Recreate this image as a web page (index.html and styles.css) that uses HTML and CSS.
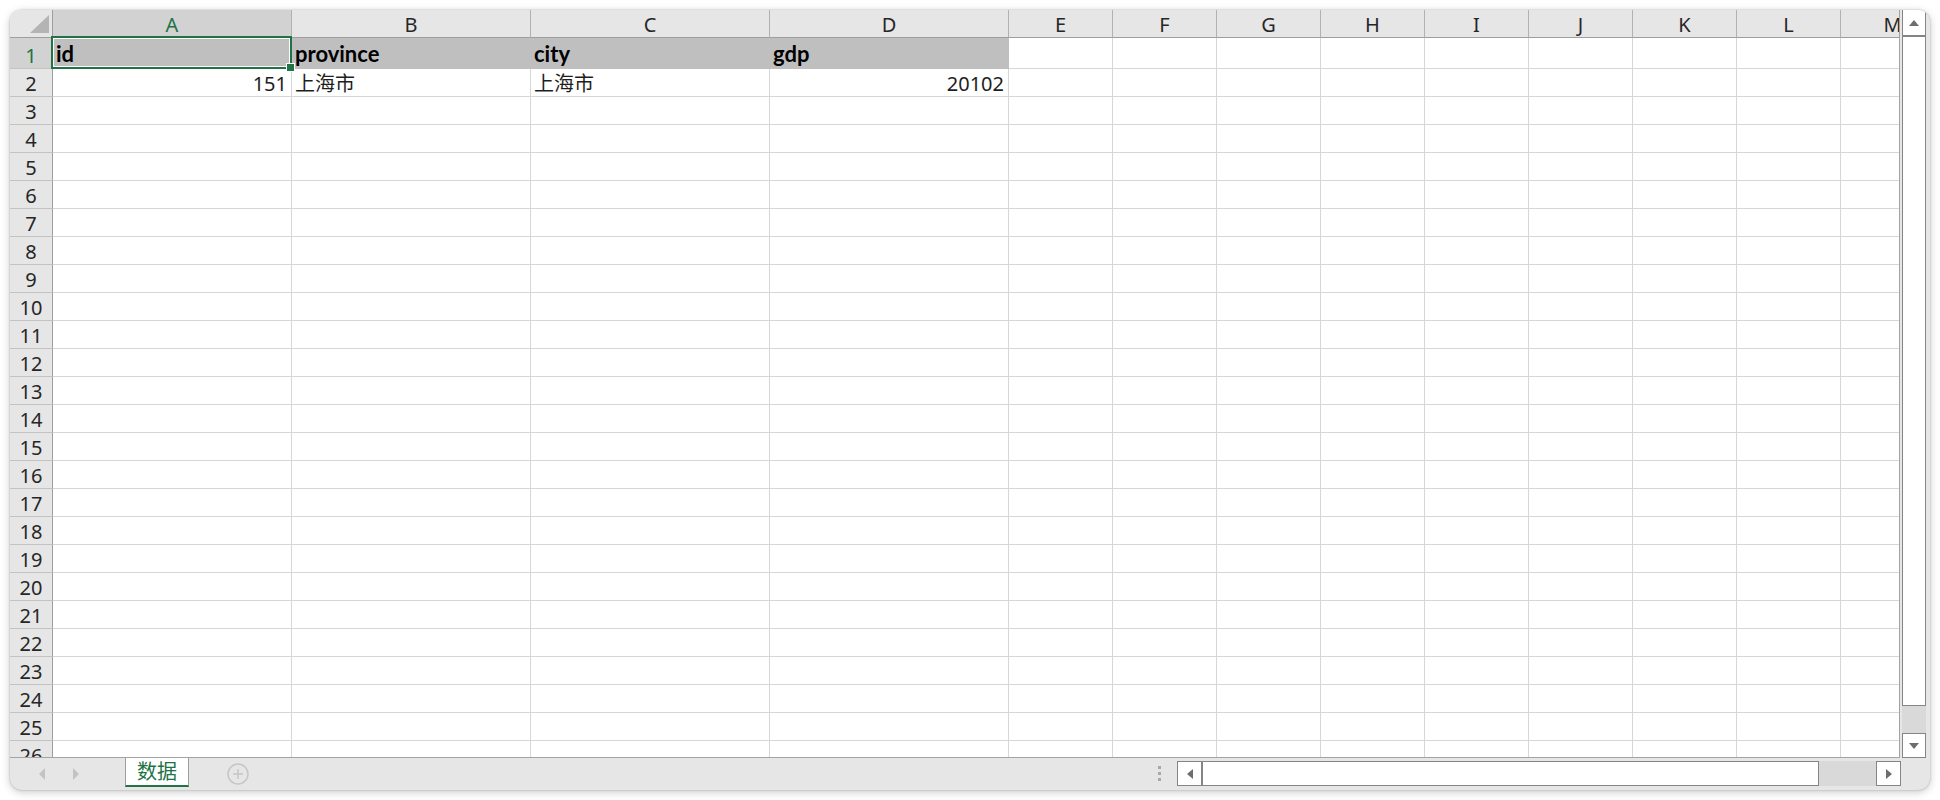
FILE: index.html
```html
<!DOCTYPE html>
<html lang="zh-CN">
<head>
<meta charset="utf-8">
<title>数据</title>
<link rel="stylesheet" href="styles.css">
</head>
<body>
<div class="window">
  <div class="main">
    <div class="sheet">
      <div class="row head">
        <span class="corner"><span class="tri"></span></span>
        <span class="ch sel">A</span><span class="ch">B</span><span class="ch">C</span><span class="ch">D</span><span class="ch">E</span><span class="ch">F</span><span class="ch">G</span><span class="ch">H</span><span class="ch">I</span><span class="ch">J</span><span class="ch">K</span><span class="ch">L</span><span class="ch">M</span>
      </div>
      <div class="row r1">
        <span class="rh sel">1</span>
        <span class="c fill b active">id</span><span class="c fill b">province</span><span class="c fill b">city</span><span class="c fill b">gdp</span><span class="c"></span><span class="c"></span><span class="c"></span><span class="c"></span><span class="c"></span><span class="c"></span><span class="c"></span><span class="c"></span><span class="c"></span>
      </div>
      <div class="row">
        <span class="rh">2</span>
        <span class="c num">151</span><span class="c">上海市</span><span class="c">上海市</span><span class="c num">20102</span><span class="c"></span><span class="c"></span><span class="c"></span><span class="c"></span><span class="c"></span><span class="c"></span><span class="c"></span><span class="c"></span><span class="c"></span>
      </div>
      <div class="row"><span class="rh">3</span><span class="c"></span><span class="c"></span><span class="c"></span><span class="c"></span><span class="c"></span><span class="c"></span><span class="c"></span><span class="c"></span><span class="c"></span><span class="c"></span><span class="c"></span><span class="c"></span><span class="c"></span></div>
      <div class="row"><span class="rh">4</span><span class="c"></span><span class="c"></span><span class="c"></span><span class="c"></span><span class="c"></span><span class="c"></span><span class="c"></span><span class="c"></span><span class="c"></span><span class="c"></span><span class="c"></span><span class="c"></span><span class="c"></span></div>
      <div class="row"><span class="rh">5</span><span class="c"></span><span class="c"></span><span class="c"></span><span class="c"></span><span class="c"></span><span class="c"></span><span class="c"></span><span class="c"></span><span class="c"></span><span class="c"></span><span class="c"></span><span class="c"></span><span class="c"></span></div>
      <div class="row"><span class="rh">6</span><span class="c"></span><span class="c"></span><span class="c"></span><span class="c"></span><span class="c"></span><span class="c"></span><span class="c"></span><span class="c"></span><span class="c"></span><span class="c"></span><span class="c"></span><span class="c"></span><span class="c"></span></div>
      <div class="row"><span class="rh">7</span><span class="c"></span><span class="c"></span><span class="c"></span><span class="c"></span><span class="c"></span><span class="c"></span><span class="c"></span><span class="c"></span><span class="c"></span><span class="c"></span><span class="c"></span><span class="c"></span><span class="c"></span></div>
      <div class="row"><span class="rh">8</span><span class="c"></span><span class="c"></span><span class="c"></span><span class="c"></span><span class="c"></span><span class="c"></span><span class="c"></span><span class="c"></span><span class="c"></span><span class="c"></span><span class="c"></span><span class="c"></span><span class="c"></span></div>
      <div class="row"><span class="rh">9</span><span class="c"></span><span class="c"></span><span class="c"></span><span class="c"></span><span class="c"></span><span class="c"></span><span class="c"></span><span class="c"></span><span class="c"></span><span class="c"></span><span class="c"></span><span class="c"></span><span class="c"></span></div>
      <div class="row"><span class="rh">10</span><span class="c"></span><span class="c"></span><span class="c"></span><span class="c"></span><span class="c"></span><span class="c"></span><span class="c"></span><span class="c"></span><span class="c"></span><span class="c"></span><span class="c"></span><span class="c"></span><span class="c"></span></div>
      <div class="row"><span class="rh">11</span><span class="c"></span><span class="c"></span><span class="c"></span><span class="c"></span><span class="c"></span><span class="c"></span><span class="c"></span><span class="c"></span><span class="c"></span><span class="c"></span><span class="c"></span><span class="c"></span><span class="c"></span></div>
      <div class="row"><span class="rh">12</span><span class="c"></span><span class="c"></span><span class="c"></span><span class="c"></span><span class="c"></span><span class="c"></span><span class="c"></span><span class="c"></span><span class="c"></span><span class="c"></span><span class="c"></span><span class="c"></span><span class="c"></span></div>
      <div class="row"><span class="rh">13</span><span class="c"></span><span class="c"></span><span class="c"></span><span class="c"></span><span class="c"></span><span class="c"></span><span class="c"></span><span class="c"></span><span class="c"></span><span class="c"></span><span class="c"></span><span class="c"></span><span class="c"></span></div>
      <div class="row"><span class="rh">14</span><span class="c"></span><span class="c"></span><span class="c"></span><span class="c"></span><span class="c"></span><span class="c"></span><span class="c"></span><span class="c"></span><span class="c"></span><span class="c"></span><span class="c"></span><span class="c"></span><span class="c"></span></div>
      <div class="row"><span class="rh">15</span><span class="c"></span><span class="c"></span><span class="c"></span><span class="c"></span><span class="c"></span><span class="c"></span><span class="c"></span><span class="c"></span><span class="c"></span><span class="c"></span><span class="c"></span><span class="c"></span><span class="c"></span></div>
      <div class="row"><span class="rh">16</span><span class="c"></span><span class="c"></span><span class="c"></span><span class="c"></span><span class="c"></span><span class="c"></span><span class="c"></span><span class="c"></span><span class="c"></span><span class="c"></span><span class="c"></span><span class="c"></span><span class="c"></span></div>
      <div class="row"><span class="rh">17</span><span class="c"></span><span class="c"></span><span class="c"></span><span class="c"></span><span class="c"></span><span class="c"></span><span class="c"></span><span class="c"></span><span class="c"></span><span class="c"></span><span class="c"></span><span class="c"></span><span class="c"></span></div>
      <div class="row"><span class="rh">18</span><span class="c"></span><span class="c"></span><span class="c"></span><span class="c"></span><span class="c"></span><span class="c"></span><span class="c"></span><span class="c"></span><span class="c"></span><span class="c"></span><span class="c"></span><span class="c"></span><span class="c"></span></div>
      <div class="row"><span class="rh">19</span><span class="c"></span><span class="c"></span><span class="c"></span><span class="c"></span><span class="c"></span><span class="c"></span><span class="c"></span><span class="c"></span><span class="c"></span><span class="c"></span><span class="c"></span><span class="c"></span><span class="c"></span></div>
      <div class="row"><span class="rh">20</span><span class="c"></span><span class="c"></span><span class="c"></span><span class="c"></span><span class="c"></span><span class="c"></span><span class="c"></span><span class="c"></span><span class="c"></span><span class="c"></span><span class="c"></span><span class="c"></span><span class="c"></span></div>
      <div class="row"><span class="rh">21</span><span class="c"></span><span class="c"></span><span class="c"></span><span class="c"></span><span class="c"></span><span class="c"></span><span class="c"></span><span class="c"></span><span class="c"></span><span class="c"></span><span class="c"></span><span class="c"></span><span class="c"></span></div>
      <div class="row"><span class="rh">22</span><span class="c"></span><span class="c"></span><span class="c"></span><span class="c"></span><span class="c"></span><span class="c"></span><span class="c"></span><span class="c"></span><span class="c"></span><span class="c"></span><span class="c"></span><span class="c"></span><span class="c"></span></div>
      <div class="row"><span class="rh">23</span><span class="c"></span><span class="c"></span><span class="c"></span><span class="c"></span><span class="c"></span><span class="c"></span><span class="c"></span><span class="c"></span><span class="c"></span><span class="c"></span><span class="c"></span><span class="c"></span><span class="c"></span></div>
      <div class="row"><span class="rh">24</span><span class="c"></span><span class="c"></span><span class="c"></span><span class="c"></span><span class="c"></span><span class="c"></span><span class="c"></span><span class="c"></span><span class="c"></span><span class="c"></span><span class="c"></span><span class="c"></span><span class="c"></span></div>
      <div class="row"><span class="rh">25</span><span class="c"></span><span class="c"></span><span class="c"></span><span class="c"></span><span class="c"></span><span class="c"></span><span class="c"></span><span class="c"></span><span class="c"></span><span class="c"></span><span class="c"></span><span class="c"></span><span class="c"></span></div>
      <div class="row"><span class="rh">26</span><span class="c"></span><span class="c"></span><span class="c"></span><span class="c"></span><span class="c"></span><span class="c"></span><span class="c"></span><span class="c"></span><span class="c"></span><span class="c"></span><span class="c"></span><span class="c"></span><span class="c"></span></div>
    </div>
    <div class="vscroll">
      <div class="sbtn up"><svg width="10" height="6" viewBox="0 0 10 6"><polygon points="0,6 10,6 5,0" fill="#6d6d6d"/></svg></div>
      <div class="vthumb"></div>
      <div class="vtrack"></div>
      <div class="sbtn down"><svg width="10" height="6" viewBox="0 0 10 6"><polygon points="0,0 10,0 5,6" fill="#6d6d6d"/></svg></div>
    </div>
  </div>
  <div class="bar">
    <div class="nav">
      <svg class="nav-l" width="6" height="12" viewBox="0 0 6 12"><polygon points="6,0 6,12 0,6" fill="#c3c3c3"/></svg>
      <svg class="nav-r" width="6" height="12" viewBox="0 0 6 12"><polygon points="0,0 0,12 6,6" fill="#c3c3c3"/></svg>
    </div>
    <div class="tab">数据</div>
    <div class="add"><svg width="22" height="22" viewBox="0 0 22 22"><circle cx="11" cy="11" r="10" fill="none" stroke="#c6c6c6" stroke-width="1.5"/><path d="M11 6v10M6 11h10" stroke="#c6c6c6" stroke-width="1.5"/></svg></div>
    <div class="spacer"></div>
    <div class="grip"><i></i><i></i><i></i></div>
    <div class="hscroll">
      <div class="hbtn"><svg width="6" height="10" viewBox="0 0 6 10"><polygon points="6,0 6,10 0,5" fill="#6d6d6d"/></svg></div>
      <div class="hthumb"></div>
      <div class="htrack"></div>
      <div class="hbtn"><svg width="6" height="10" viewBox="0 0 6 10"><polygon points="0,0 0,10 6,5" fill="#6d6d6d"/></svg></div>
    </div>
  </div>
</div>
</body>
</html>
```

FILE: styles.css
```css
* { box-sizing: border-box; }
html, body { margin: 0; padding: 0; background: #ffffff; }
body {
  font-family: "Noto Sans", "Noto Sans CJK SC", sans-serif;
  font-size: 20px;
  color: #1e1e1e;
}

.window {
  margin: 10px;
  width: 1920px;
  height: 780px;
  border-radius: 12px;
  background: #e6e6e6;
  box-shadow: 0 0 2px rgba(0,0,0,0.25), 0 2px 9px rgba(0,0,0,0.22);
  overflow: hidden;
  display: flex;
  flex-direction: column;
}

.main { display: flex; height: 748px; }

.sheet {
  width: 1890px;
  height: 748px;
  flex: none;
  overflow: hidden;
  background: #ffffff;
  border-right: 1px solid #a3a3a3;
  border-bottom: 1px solid #a3a3a3;
}

.row {
  display: grid;
  grid-template-columns: 43px repeat(4, 239px) repeat(9, 104px);
  height: 28px;
}
.row.r1 { height: 31px; }

.row > span {
  display: flex;
  align-items: flex-end;
  line-height: 24px;
  white-space: nowrap;
  overflow: visible;
  border-right: 1px solid #d6d6d6;
  border-bottom: 1px solid #d6d6d6;
}

/* column headers */
.head > .ch {
  justify-content: center;
  background: #e6e6e6;
  border-right: 1px solid #b1b1b1;
  border-bottom: 1px solid #9e9e9e;
  color: #262626;
}
.head > .ch.sel { background: #d2d2d2; color: #217346; }

.corner {
  position: relative;
  background: #e6e6e6;
  border-right: 1px solid #9e9e9e !important;
  border-bottom: 1px solid #9e9e9e !important;
}
.corner .tri {
  position: absolute;
  left: 20px;
  top: 5px;
  width: 19px;
  height: 18px;
  background: #b4b4b4;
  clip-path: polygon(100% 0, 100% 100%, 0 100%);
}

/* row headers */
.row > .rh {
  justify-content: center;
  background: #e6e6e6;
  border-right: 1px solid #9e9e9e;
  border-bottom: 1px solid #c3c3c3;
  color: #262626;
}
.row > .rh.sel { background: #d2d2d2; color: #217346; }

/* cells */
.c { padding: 0 3px; }
.c.num { justify-content: flex-end; padding-right: 4px; }
.row > .c.fill { background: #bfbfbf; border-color: #bfbfbf; }
.c.b {
  font-family: "Lato", "Noto Sans CJK SC", sans-serif;
  font-weight: 700;
  font-size: 22px;
  color: #000;
  line-height: 28px;
}

.c.active { position: relative; }
.c.active::after {
  content: "";
  position: absolute;
  left: -2px;
  top: -2px;
  right: -1px;
  bottom: -1px;
  border: 2px solid #217346;
  box-shadow: inset 0 0 0 1px #ffffff;
  z-index: 2;
}
.c.active::before {
  content: "";
  position: absolute;
  right: -4px;
  bottom: -4px;
  width: 7px;
  height: 7px;
  background: #217346;
  border: 1px solid #ffffff;
  z-index: 3;
}

/* vertical scrollbar */
.vscroll {
  width: 30px;
  flex: none;
  padding: 0 4px 0 2px;
  display: flex;
  flex-direction: column;
}
.sbtn {
  background: #ffffff;
  border: 1px solid #858585;
  display: flex;
  align-items: center;
  justify-content: center;
}
.sbtn.up { height: 26px; border-top: none; }
.sbtn.down { height: 25px; }
.vthumb {
  height: 670px;
  background: #ffffff;
  border: 1px solid #858585;
}
.vtrack { height: 27px; background: #d9d9d9; }

/* bottom bar */
.bar {
  height: 32px;
  display: flex;
  align-items: flex-start;
}
.nav {
  width: 115px;
  height: 32px;
  display: flex;
  align-items: center;
  padding-left: 29px;
  gap: 28px;
}
.tab {
  width: 64px;
  height: 29px;
  background: #ffffff;
  border-left: 1px solid #9e9e9e;
  border-right: 1px solid #9e9e9e;
  border-bottom: 2px solid #217346;
  color: #217346;
  text-align: center;
  font-family: "Noto Sans CJK SC", sans-serif;
  font-size: 20px;
  line-height: 26px;
}
.add {
  margin-left: 38px;
  height: 32px;
  display: flex;
  align-items: center;
}
.spacer { flex: 1; }
.grip {
  width: 19px;
  height: 32px;
  display: flex;
  flex-direction: column;
  align-items: flex-start;
  padding-top: 8px;
  gap: 3px;
}
.grip i {
  display: block;
  width: 3px;
  height: 3px;
  background: #a9a9a9;
}
.hscroll {
  margin-top: 3px;
  margin-right: 29px;
  height: 25px;
  width: 724px;
  display: flex;
}
.hbtn {
  width: 25px;
  height: 25px;
  background: #ffffff;
  border: 1px solid #858585;
  display: flex;
  align-items: center;
  justify-content: center;
}
.hthumb {
  width: 617px;
  background: #ffffff;
  border: 1px solid #858585;
}
.htrack { width: 57px; background: #d9d9d9; }
```
